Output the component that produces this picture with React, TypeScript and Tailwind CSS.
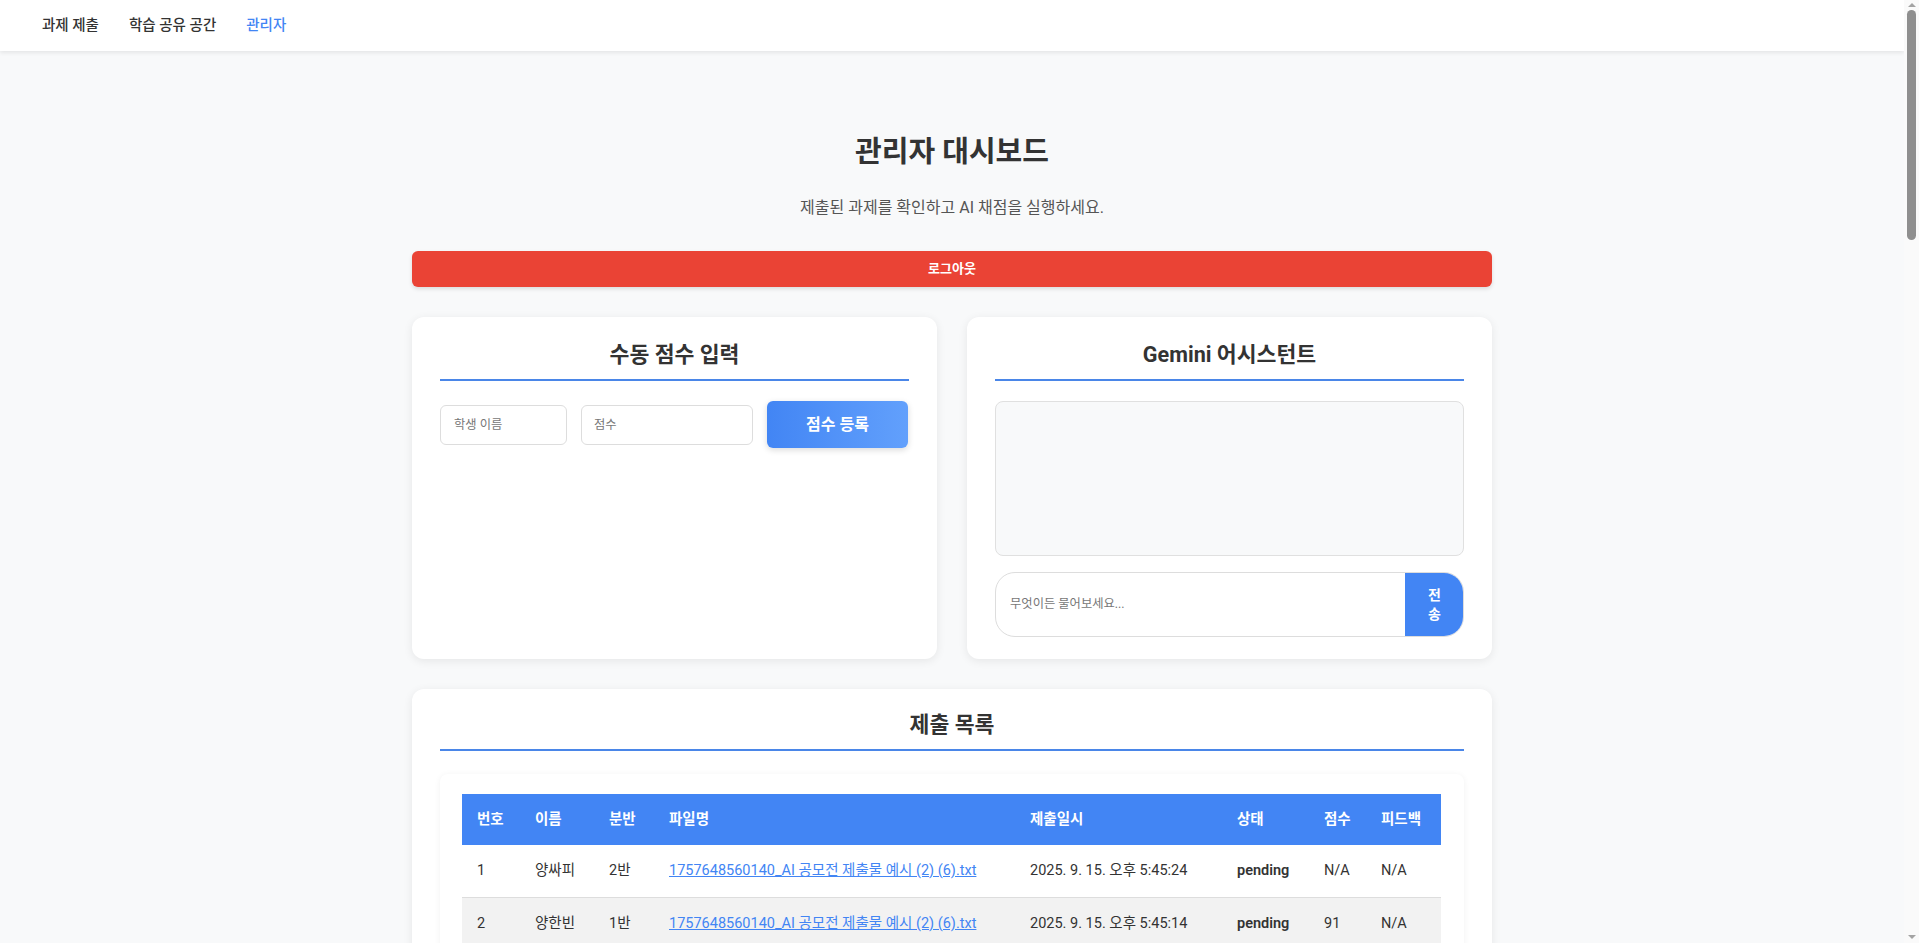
import { useState } from "react";

type Submission = {
  id: number;
  name: string;
  cls: string;
  file: string;
  date: string;
  status: string;
  score: string;
  feedback: string;
};

const FILE = "1757648560140_AI 공모전 제출물 예시 (2) (6).txt";

const names = ["양싸피", "양한빈", "김민준", "이서연", "박지호", "최수아", "정도윤", "강하은", "조시우", "윤지유"];

const submissions: Submission[] = Array.from({ length: 12 }, (_, i) => {
  const total = 45 * 60 + 24 - i * 10;
  const m = Math.floor(total / 60);
  const s = total % 60;
  return {
    id: i + 1,
    name: names[i % names.length],
    cls: i % 2 === 0 ? "2반" : "1반",
    file: FILE,
    date: `2025. 9. 15. 오후 5:${String(m).padStart(2, "0")}:${String(s).padStart(2, "0")}`,
    status: "pending",
    score: i === 1 ? "91" : "N/A",
    feedback: "N/A",
  };
});

const colWidths = ["w-[58px]", "w-[74px]", "w-[60px]", "w-[361px]", "w-[207px]", "w-[87px]", "w-[57px]", "w-[75px]"];
const headers = ["번호", "이름", "분반", "파일명", "제출일시", "상태", "점수", "피드백"];

function CardTitle({ children }: { children: React.ReactNode }) {
  return (
    <h2 className="text-center text-[21.6px] leading-[20px] font-bold text-[#333] pb-[14px] border-b-2 border-[#4a86e8] mb-[20px]">
      {children}
    </h2>
  );
}

function ScrollBar() {
  return (
    <aside className="w-[15px] h-screen bg-[#fafafa] flex flex-col items-center shrink-0">
      <div className="h-[10px] flex items-center justify-center">
        <div className="w-0 h-0 border-x-[4px] border-x-transparent border-b-[4px] border-b-[#a3a3a3]" />
      </div>
      <div className="w-[9px] h-[230px] rounded-full bg-[#8f8f8f]" />
      <div className="flex-1" />
      <div className="h-[12px] flex items-center justify-center">
        <div className="w-0 h-0 border-x-[4px] border-x-transparent border-t-[4px] border-t-[#a3a3a3]" />
      </div>
    </aside>
  );
}

export default function App() {
  const [name, setName] = useState("");
  const [score, setScore] = useState("");
  const [question, setQuestion] = useState("");

  return (
    <div className="flex h-screen overflow-hidden bg-[#f8f9fa] text-[#333] font-['Roboto','Noto_Sans_CJK_KR',sans-serif]">
      <div className="flex-1 h-screen overflow-y-auto [scrollbar-width:none]">
        <nav className="h-[51px] bg-white shadow-[0_2px_4px_rgba(0,0,0,0.08)] flex items-center gap-[30px] pl-[42px] text-[14.5px] font-medium">
          <a className="text-[#333] cursor-pointer">과제 제출</a>
          <a className="text-[#333] cursor-pointer">학습 공유 공간</a>
          <a className="text-[#4285f4] cursor-pointer">관리자</a>
        </nav>

        <main className="w-[1080px] mx-auto pt-[83px] pb-10">
          <h1 className="text-center text-[29px] leading-[36px] font-bold text-[#333]">관리자 대시보드</h1>
          <p className="text-center text-[16px] leading-6 text-[#555] mt-[26px]">
            제출된 과제를 확인하고 AI 채점을 실행하세요.
          </p>

          <button className="mt-[31px] w-full h-[36px] rounded-md bg-[#ea4335] text-white text-[13px] font-bold shadow-[0_2px_4px_rgba(0,0,0,0.12)]">
            로그아웃
          </button>

          <div className="grid grid-cols-2 gap-[30px] mt-[30px]">
            <section className="bg-white rounded-xl shadow-[0_2px_10px_rgba(0,0,0,0.08)] px-7 pt-7 pb-7">
              <CardTitle>수동 점수 입력</CardTitle>
              <div className="flex items-center gap-[14px]">
                <input
                  value={name}
                  onChange={(e) => setName(e.target.value)}
                  placeholder="학생 이름"
                  className="w-[127px] h-[40px] border border-[#ddd] rounded-md px-[13px] text-[12.3px] placeholder:text-[#777] outline-none"
                />
                <input
                  value={score}
                  onChange={(e) => setScore(e.target.value)}
                  placeholder="점수"
                  className="w-[172px] h-[40px] border border-[#ddd] rounded-md px-[12px] text-[12.3px] placeholder:text-[#777] outline-none"
                />
                <button className="w-[141px] h-[47px] rounded-md bg-linear-to-r from-[#4285f4] to-[#62a0fc] text-white text-[16px] font-bold shadow-[0_2px_6px_rgba(0,0,0,0.15)]">
                  점수 등록
                </button>
              </div>
            </section>

            <section className="bg-white rounded-xl shadow-[0_2px_10px_rgba(0,0,0,0.08)] px-7 pt-7 pb-[22px]">
              <CardTitle>Gemini 어시스턴트</CardTitle>
              <div className="h-[155px] bg-[#f8f9fa] border border-[#e0e0e0] rounded-lg" />
              <div className="mt-4 flex h-[65px] border border-[#ddd] rounded-[20px] overflow-hidden">
                <input
                  value={question}
                  onChange={(e) => setQuestion(e.target.value)}
                  placeholder="무엇이든 물어보세요..."
                  className="flex-1 px-[14px] text-[12.3px] placeholder:text-[#777] outline-none"
                />
                <button className="w-[59px] px-5 bg-[#4285f4] text-white text-[14px] leading-[19px] font-bold -my-px -mr-px rounded-r-[20px]">
                  전송
                </button>
              </div>
            </section>
          </div>

          <section className="mt-[30px] bg-white rounded-xl shadow-[0_2px_10px_rgba(0,0,0,0.08)] px-7 pt-[26px] pb-7">
            <CardTitle>제출 목록</CardTitle>
            <div className="mt-[23px] bg-white rounded-lg shadow-[0_1px_6px_rgba(0,0,0,0.06)] px-[22px] pt-5 pb-5">
              <table className="w-[979px] table-fixed border-collapse text-[14.5px] text-left">
                <colgroup>
                  {colWidths.map((w, i) => (
                    <col key={i} className={w} />
                  ))}
                </colgroup>
                <thead>
                  <tr className="bg-[#4285f4] text-white">
                    {headers.map((h) => (
                      <th key={h} className="px-[15px] py-[15px] leading-[21px] font-bold">
                        {h}
                      </th>
                    ))}
                  </tr>
                </thead>
                <tbody>
                  {submissions.map((s, i) => (
                    <tr key={s.id} className={`border-b border-[#ddd] ${i % 2 === 1 ? "bg-[#f2f2f2]" : "bg-white"}`}>
                      <td className="px-[15px] py-[15px] leading-[22px]">{s.id}</td>
                      <td className="px-[15px] py-[15px] leading-[22px]">{s.name}</td>
                      <td className="px-[15px] py-[15px] leading-[22px]">{s.cls}</td>
                      <td className="px-[15px] py-[15px] leading-[22px] whitespace-nowrap">
                        <a className="text-[#4285f4] underline cursor-pointer">{s.file}</a>
                      </td>
                      <td className="px-[15px] py-[15px] leading-[22px] whitespace-nowrap">{s.date}</td>
                      <td className="px-[15px] py-[15px] leading-[22px] font-semibold">{s.status}</td>
                      <td className="px-[15px] py-[15px] leading-[22px]">{s.score}</td>
                      <td className="px-[15px] py-[15px] leading-[22px]">{s.feedback}</td>
                    </tr>
                  ))}
                </tbody>
              </table>
            </div>
          </section>
        </main>
      </div>
      <ScrollBar />
    </div>
  );
}
